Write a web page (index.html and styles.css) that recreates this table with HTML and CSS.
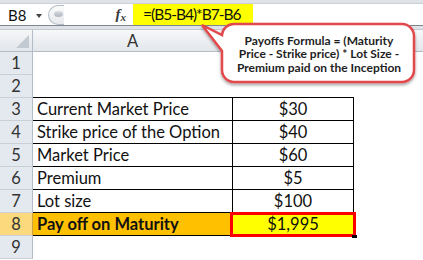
FILE: index.html
```html
<!DOCTYPE html>
<html>
<head>
<meta charset="utf-8">
<link rel="stylesheet" href="styles.css">
</head>
<body>
<div class="screen">
  <div class="fbar">
    <div class="fb-row">
      <div class="namebox"><span class="nm">B8</span><span class="dd"></span></div>
      <div class="grip"><span class="knob"></span></div>
      <div class="fx"><i>f</i><i class="x">x</i></div>
      <div class="formula">=(B5-B4)*B7-B6</div>
    </div>
  </div>
  <div class="sheet">
    <div class="rh corner"><span class="tri"></span></div>
    <div class="ch">A</div>
    <div class="ch chb"></div>
    <div class="ch chr"></div>

    <div class="rh">1</div><div class="c"></div><div class="c"></div><div class="c"></div>
    <div class="rh">2</div><div class="c tb"></div><div class="c tb"></div><div class="c"></div>

    <div class="rh">3</div><div class="c t ta">Current Market Price</div><div class="c t tv">$30</div><div class="c"></div>
    <div class="rh">4</div><div class="c t ta">Strike price of the Option</div><div class="c t tv">$40</div><div class="c"></div>
    <div class="rh">5</div><div class="c t ta">Market Price</div><div class="c t tv">$60</div><div class="c"></div>
    <div class="rh">6</div><div class="c t ta">Premium</div><div class="c t tv">$5</div><div class="c"></div>
    <div class="rh">7</div><div class="c t ta">Lot size</div><div class="c t tv">$100</div><div class="c"></div>
    <div class="rh sel">8</div><div class="c t ta orange">Pay off on Maturity</div><div class="c t tv yellow">$1,995<span class="redbox"></span><span class="handle"></span></div><div class="c"></div>
    <div class="rh">9</div><div class="c"></div><div class="c"></div><div class="c"></div>
  </div>

  <svg class="callout-shape" width="224" height="72" viewBox="0 0 224 72">
    <defs>
      <filter id="sh" x="-10%" y="-10%" width="120%" height="130%">
        <feDropShadow dx="0" dy="2" stdDeviation="1.5" flood-color="#000" flood-opacity="0.35"/>
      </filter>
    </defs>
    <path d="M36 4 H204 A12 12 0 0 1 216 16 V50 A12 12 0 0 1 204 62 H36 A12 12 0 0 1 24 50 V31 L4 5 L24 15 A12 12 0 0 1 36 4 Z"
          fill="#fff" stroke="#e2484c" stroke-width="2.5" filter="url(#sh)"/>
  </svg>
  <div class="callout-text">Payoffs Formula = (Maturity<br>Price - Strike price) * Lot Size -<br>Premium paid on the Inception</div>
</div>
</body>
</html>
```
FILE: styles.css
```css
* { box-sizing: border-box; }
html, body { margin: 0; padding: 0; background: #fff; }
body { font-family: Lato, "Open Sans", sans-serif; }

.screen {
  position: relative;
  width: 423px;
  height: 260px;
  overflow: hidden;
}

/* Formula bar */
.fbar {
  height: 30px;
  background: #dfe3e8;
  padding-top: 3px;
  border-bottom: 1px solid #c4cad2;
}
.fb-row {
  height: 23px;
  background: #fff;
  border-top: 1px solid #c9d0d8;
  border-bottom: 1px solid #7d8590;
  display: flex;
  align-items: stretch;
}
.namebox {
  width: 47px;
  display: flex;
  align-items: center;
  padding-left: 8px;
  font-size: 15px;
  color: #111;
}
.nm { width: 28px; }
.dd {
  width: 0; height: 0;
  border-left: 3.5px solid transparent;
  border-right: 3.5px solid transparent;
  border-top: 4px solid #444;
  margin-top: 2px;
}
.grip {
  width: 16px;
  margin: 1px 0 0 1px;
  height: 20px;
  border: 1px solid #b4bcc6;
  border-right: none;
  border-radius: 11px 0 0 11px;
  background: linear-gradient(#fbfbfb, #e6e8eb);
  position: relative;
}
.knob {
  position: absolute;
  left: 5px; top: 5px;
  width: 9px; height: 6px;
  border-radius: 50%;
  background: linear-gradient(#d9dde2, #aeb5bd);
}
.fx {
  width: 69px;
  display: flex;
  justify-content: flex-end;
  align-items: center;
  padding-right: 7px;
  font-family: "Liberation Serif", serif;
  font-weight: bold;
  color: #3a3a3a;
  font-size: 15px;
}
.fx .x { font-size: 11px; margin-top: 4px; }
.formula {
  width: 120px;
  background: #ffff00;
  font-size: 15.5px;
  letter-spacing: -1px;
  line-height: 21px;
  padding-left: 10px;
  color: #111;
  white-space: nowrap;
}

/* Sheet */
.sheet {
  display: grid;
  grid-template-columns: 33px 200px 121px 1fr;
  grid-template-rows: 22px repeat(9, 23px);
  font-size: 16.5px;
  color: #111;
}
.rh {
  background: #e4e9ef;
  border-right: 1px solid #b4bcc6;
  border-bottom: 1px solid #c8cfd7;
  color: #333;
  text-align: center;
  line-height: 22px;
}
.rh.sel { background: #fcd97d; border-right-color: #c9a24a; }
.corner { position: relative; border-bottom-color: #b4bcc6; background: linear-gradient(#f5f6f8, #e2e6ea); }
.tri {
  position: absolute;
  right: 3px; bottom: 3px;
  width: 0; height: 0;
  border-left: 13px solid transparent;
  border-bottom: 13px solid #c3c9d0;
}
.ch {
  background: linear-gradient(#f7f8fa, #e3e7eb);
  border-bottom: 1px solid #b4bcc6;
  border-right: 1px solid #c8cfd7;
  text-align: center;
  line-height: 22px;
  color: #333;
}
.chr { border-right: none; }
.c { line-height: 22px; white-space: nowrap; }
.tb { border-bottom: 1px solid #000; }
.t { border-bottom: 1px solid #000; border-right: 1px solid #000; }
.ta { padding-left: 4px; }
.tv { text-align: center; position: relative; }
.orange { background: #ffc000; font-weight: bold; }
.yellow { background: #ffff00; }
.redbox {
  position: absolute;
  left: -3px; right: -3px; top: -1px; bottom: -2px;
  border: 3px solid #ff0000;
}
.handle {
  position: absolute;
  right: -4px; bottom: -3px;
  width: 5px; height: 3px;
  background: #000;
}

/* Callout */
.callout-shape {
  position: absolute;
  left: 198px;
  top: 20px;
}
.callout-text {
  position: absolute;
  left: 222px;
  top: 25px;
  width: 194px;
  height: 58px;
  display: flex;
  align-items: center;
  justify-content: center;
  text-align: center;
  font-weight: bold;
  font-size: 12px;
  line-height: 13.5px;
  color: #1e1e1e;
}
```
